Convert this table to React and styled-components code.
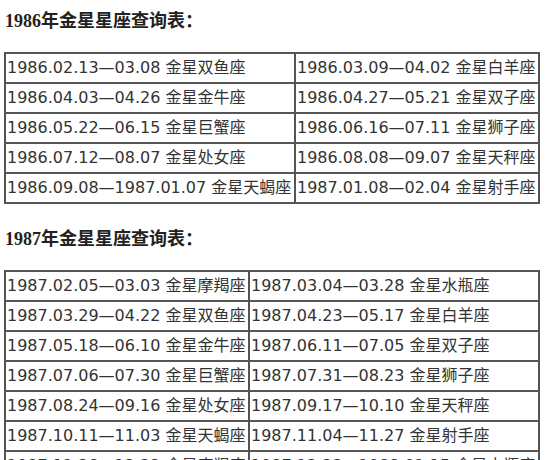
import React from "react";
import styled, { createGlobalStyle } from "styled-components";

const GlobalStyle = createGlobalStyle`
  body {
    margin: 0;
    background: #fff;
  }
`;

// style
const Page = styled.div`
  padding: 0 0 0 4px;
  width: 534px;
`;

const Title = styled.h3`
  margin: 0;
  padding: 11px 0 0 1px;
  height: 52px;
  box-sizing: border-box;
  font-family: "Liberation Serif", "Noto Sans CJK SC", serif;
  font-size: 18px;
  line-height: 20px;
  font-weight: bold;
  color: #222;
`;

const Section = styled.section`
  & + & {
    margin-top: 14px;
  }
`;

const Table = styled.table`
  width: 534px;
  border-collapse: collapse;
  table-layout: fixed;
  font-family: "DejaVu Sans", "Noto Sans CJK SC", sans-serif;
  font-size: 16px;
  color: #333;
`;

const Cell = styled.td`
  height: 28px;
  padding: 0 0 0 1px;
  border: 2px solid #555;
  line-height: 28px;
  white-space: nowrap;
  overflow: hidden;
  vertical-align: middle;
`;

const tables = [
  {
    year: 1986,
    cols: [290, 244],
    rows: [
      ["1986.02.13—03.08 金星双鱼座", "1986.03.09—04.02 金星白羊座"],
      ["1986.04.03—04.26 金星金牛座", "1986.04.27—05.21 金星双子座"],
      ["1986.05.22—06.15 金星巨蟹座", "1986.06.16—07.11 金星狮子座"],
      ["1986.07.12—08.07 金星处女座", "1986.08.08—09.07 金星天秤座"],
      ["1986.09.08—1987.01.07 金星天蝎座", "1987.01.08—02.04 金星射手座"],
    ],
  },
  {
    year: 1987,
    cols: [244, 290],
    rows: [
      ["1987.02.05—03.03 金星摩羯座", "1987.03.04—03.28 金星水瓶座"],
      ["1987.03.29—04.22 金星双鱼座", "1987.04.23—05.17 金星白羊座"],
      ["1987.05.18—06.10 金星金牛座", "1987.06.11—07.05 金星双子座"],
      ["1987.07.06—07.30 金星巨蟹座", "1987.07.31—08.23 金星狮子座"],
      ["1987.08.24—09.16 金星处女座", "1987.09.17—10.10 金星天秤座"],
      ["1987.10.11—11.03 金星天蝎座", "1987.11.04—11.27 金星射手座"],
      ["1987.11.28—12.22 金星摩羯座", "1987.12.23—1988.01.15 金星水瓶座"],
    ],
  },
];

const App = () => {
  return (
    <React.Fragment>
      <GlobalStyle />
      <Page>
        {tables.map((t) => (
          <Section key={t.year}>
            <Title>{t.year}年金星星座查询表：</Title>
            <Table>
              <colgroup>
                {t.cols.map((w, i) => (
                  <col key={i} style={{ width: w }} />
                ))}
              </colgroup>
              <tbody>
                {t.rows.map((row, i) => (
                  <tr key={i}>
                    {row.map((text, j) => (
                      <Cell key={j}>{text}</Cell>
                    ))}
                  </tr>
                ))}
              </tbody>
            </Table>
          </Section>
        ))}
      </Page>
    </React.Fragment>
  );
};

export default App;
